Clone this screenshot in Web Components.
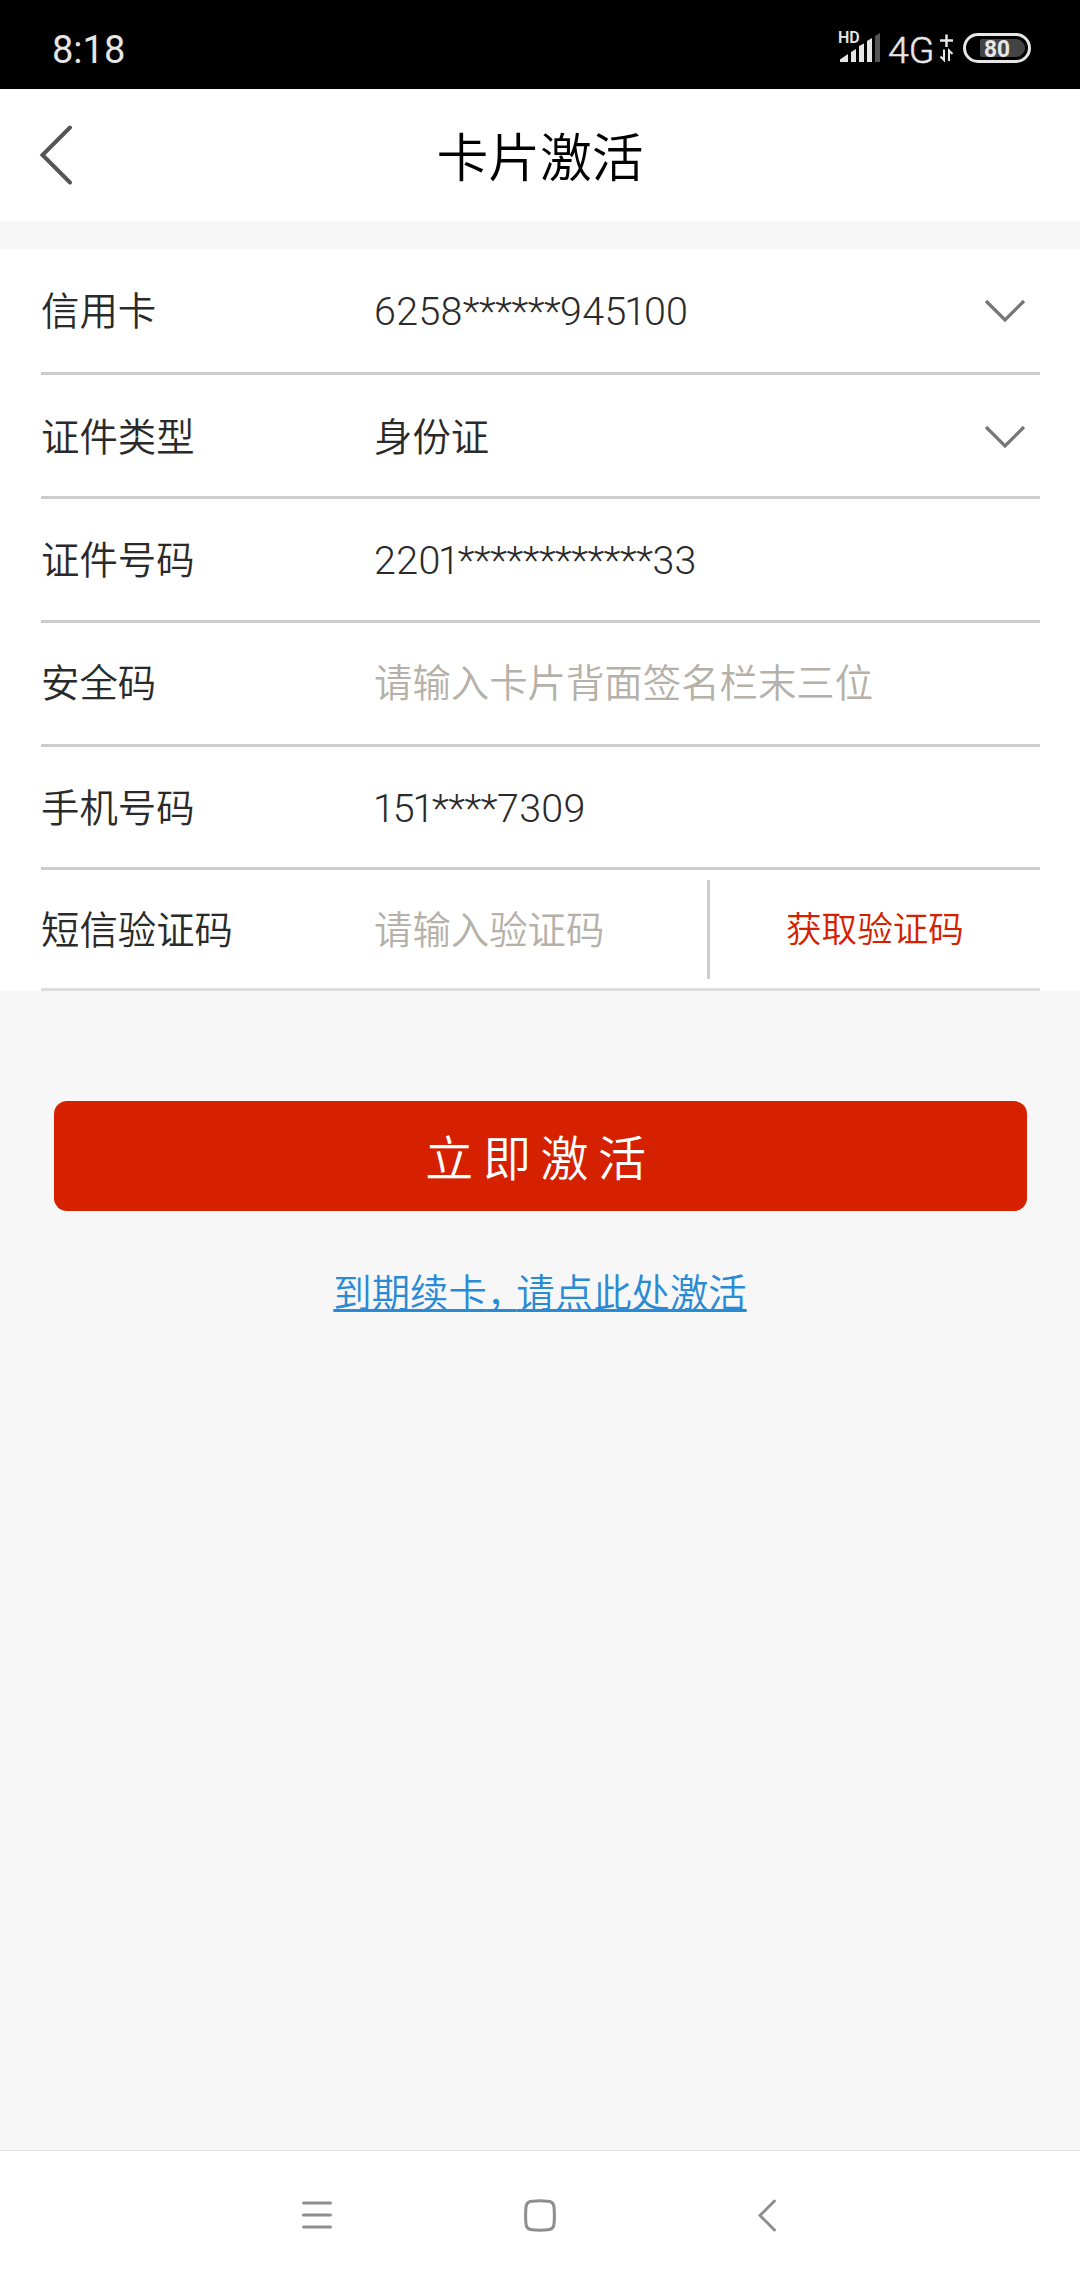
<!DOCTYPE html>
<html lang="zh-CN">
<head>
<meta charset="UTF-8">
<title>卡片激活</title>
<style>
  body {
    margin: 0;
    background: #f7f7f7;
    font-family: Roboto, "Noto Sans CJK SC", sans-serif;
    font-weight: 350;
    color: #2a2a2a;
  }
</style>
</head>
<body>
<activation-page></activation-page>

<script>
class StatusBar extends HTMLElement {
    constructor() {
        super();
        this.attachShadow({ mode: 'open' }).innerHTML = `
          <style>
            :host {
              display: flex;
              align-items: center;
              justify-content: space-between;
              box-sizing: border-box;
              height: 89px;
              padding: 6px 49px 0 52px;
              background: #000;
              color: #e6e6e6;
            }
            .time { font-size: 38px; line-height: 44px; font-weight: 400; padding-top: 4px; }
            svg { display: block; }
          </style>
          <span class="time"><slot></slot></span>
          <svg width="194" height="56" viewBox="837 19 194 56" font-family="Roboto" fill="#e6e6e6">
            <text x="838" y="42" font-size="16" font-weight="600">HD</text>
            <path d="M840 61V58.5L848 53V61ZM851 61V51L856 48V61ZM859 61V45L864 42.5V61ZM867 61V40L872 37V61Z"/>
            <path d="M875 61V35L880 32V61Z" fill="#555"/>
            <text x="888" y="61.5" font-size="37.5" font-weight="300" stroke="#e6e6e6" stroke-width=".5">4G</text>
            <path d="M940 39.5H953M946.5 33.5V46" fill="none" stroke="#e6e6e6" stroke-width="2.5"/>
            <path d="M944 48.5V59L940.5 55.5M949 60V49.5L952.5 53" fill="none" stroke="#e6e6e6" stroke-width="2"/>
            <rect x="964.5" y="33.5" width="65" height="27" rx="13.5" fill="none" stroke="#e6e6e6" stroke-width="3"/>
            <path d="M982 38H1016A9 9 0 0 1 1016 56H982Q980 56 980 54V40Q980 38 982 38Z" fill="#444"/>
            <text x="984" y="55.5" font-size="23.5" font-weight="700" textLength="26" lengthAdjust="spacingAndGlyphs">80</text>
          </svg>
        `;
    }
}

class TitleBar extends HTMLElement {
    constructor() {
        super();
        this.attachShadow({ mode: 'open' }).innerHTML = `
          <style>
            :host {
              display: grid;
              grid-template-columns: 120px 1fr 120px;
              align-items: center;
              height: 132px;
              margin-bottom: 28px;
              background: #fff;
            }
            svg { display: block; margin-left: 36px; }
            h1 {
              margin: 0;
              padding-top: 9px;
              font-size: 51.8px;
              line-height: 60px;
              font-weight: inherit;
              text-align: center;
              color: #000;
            }
          </style>
          <svg width="40" height="64" viewBox="0 0 40 64">
            <path d="M34 4.5L6.5 32L34 59.5" fill="none" stroke="#555" stroke-width="4" stroke-linecap="round"/>
          </svg>
          <h1><slot></slot></h1>
        `;
    }
}

class FormRow extends HTMLElement {
    constructor() {
        super();
        this.attachShadow({ mode: 'open' }).innerHTML = `
          <style>
            :host {
              display: flex;
              align-items: center;
              box-sizing: border-box;
              height: 124px;
              margin: 0 40px 0 41px;
              border-bottom: 3px solid #ccc;
              font-size: 38.4px;
              line-height: 56px;
            }
            .label { width: 333px; }
            .value { flex: 1; white-space: nowrap; }
            .label, .value { padding-top: var(--text-drop, 3px); }
            :host([placeholder]) .value { color: #b5b1a9; }
            svg { display: none; margin-right: 12px; }
            :host([select]) svg { display: block; }
          </style>
          <span class="label"></span>
          <span class="value"><slot></slot></span>
          <slot name="action"></slot>
          <svg width="46" height="26" viewBox="0 0 46 26">
            <path d="M4 3L23 22L42 3" fill="none" stroke="#777" stroke-width="3.2"/>
          </svg>
        `;
    }

    connectedCallback() {
        this.shadowRoot.querySelector('.label').textContent = this.getAttribute('label');
    }
}

class CodeButton extends HTMLElement {
    constructor() {
        super();
        this.attachShadow({ mode: 'open' }).innerHTML = `
          <style>
            :host {
              display: flex;
              align-items: center;
              box-sizing: border-box;
              width: 333px;
              height: 99px;
              padding: 2px 0 0 76px;
              border-left: 3px solid #ccc;
              font-size: 35.6px;
              color: #d62100;
            }
          </style>
          <slot></slot>
        `;
    }
}

class SubmitButton extends HTMLElement {
    constructor() {
        super();
        this.attachShadow({ mode: 'open' }).innerHTML = `
          <style>
            :host { display: block; margin: 110px 53px 0 54px; }
            button {
              display: block;
              width: 100%;
              height: 110px;
              padding: 0 0 2px;
              border: none;
              border-radius: 13px;
              background: #d62100;
              color: #fff;
              font: inherit;
              font-size: 48px;
              letter-spacing: 9.6px;
            }
          </style>
          <button><slot></slot></button>
        `;
    }
}

class RenewLink extends HTMLElement {
    constructor() {
        super();
        this.attachShadow({ mode: 'open' }).innerHTML = `
          <style>
            :host {
              display: flex;
              justify-content: center;
              margin-top: 55px;
              font-size: 38.4px;
              line-height: 56px;
            }
            a {
              color: #2a8ad4;
              text-decoration: underline;
              text-decoration-thickness: 3px;
              text-underline-offset: 2px;
              text-decoration-skip-ink: none;
            }
          </style>
          <a><slot></slot></a>
        `;
    }
}

class NavBar extends HTMLElement {
    constructor() {
        super();
        this.attachShadow({ mode: 'open' }).innerHTML = `
          <style>
            :host {
              display: flex;
              align-items: center;
              justify-content: center;
              gap: 191px;
              box-sizing: border-box;
              height: 130px;
              margin-top: auto;
              border-top: 1px solid #e0e0e0;
              background: #fff;
            }
            svg { fill: none; stroke: #8e8e8e; stroke-width: 3; stroke-linecap: round; }
          </style>
          <svg width="32" height="34" viewBox="0 0 32 34"><path d="M2.5 4H29.5M2.5 16H29.5M2.5 28H29.5"/></svg>
          <svg width="32" height="34" viewBox="0 0 32 34"><path d="M8 2.2Q16 1.500 24 2.200Q29.500 2.500 30 8Q30.800 16.500 30 25Q29.500 30.500 24 30.800Q16 31.500 8 30.800Q2.500 30.500 2 25Q1.200 16.500 2 8Q2.500 2.500 8 2.200Z"/></svg>
          <svg width="32" height="34" viewBox="0 0 32 34"><path d="M27.5 2L13 16.5L27.5 31"/></svg>
        `;
    }
}

class ActivationPage extends HTMLElement {
    constructor() {
        super();
        this.attachShadow({ mode: 'open' }).innerHTML = `
          <style>
            :host { display: flex; flex-direction: column; height: 2280px; }
            section { background: #fff; }
            .num { font-size: 39.4px; font-weight: 300; letter-spacing: .35px; }
            .stars { letter-spacing: -.5px; }
            .one { margin: 0 -2.5px; }
            .lead { margin: 0 -2.5px 0 -1px; }
            .tall { height: 126px; }
            .type { padding-top: 2px; }
            .code { --text-drop: 0; }
            .phone { height: 123px; }
            .sms { height: 121px; border-color: #ddd; }
            .comma { letter-spacing: -8.9px; }
          </style>
          <status-bar>8:18</status-bar>
          <title-bar>卡片激活</title-bar>
          <section>
            <form-row class="tall" label="信用卡" select><span class="num">6258<span class="stars">******</span>945<span class="one">1</span>00</span></form-row>
            <form-row class="type" label="证件类型" select>身份证</form-row>
            <form-row label="证件号码"><span class="num">220<span class="one">1</span><span class="stars">************</span>33</span></form-row>
            <form-row class="code" label="安全码" placeholder>请输入卡片背面签名栏末三位</form-row>
            <form-row class="phone" label="手机号码"><span class="num"><span class="lead">1</span>5<span class="one">1</span><span class="stars">****</span>7309</span></form-row>
            <form-row class="sms" label="短信验证码" placeholder>
              请输入验证码
              <code-button slot="action">获取验证码</code-button>
            </form-row>
          </section>
          <submit-button>立即激活</submit-button>
          <renew-link>到期续卡<span class="comma">，</span>请点此处激活</renew-link>
          <nav-bar></nav-bar>
        `;
    }
}

customElements.define('status-bar', StatusBar);
customElements.define('title-bar', TitleBar);
customElements.define('form-row', FormRow);
customElements.define('code-button', CodeButton);
customElements.define('submit-button', SubmitButton);
customElements.define('renew-link', RenewLink);
customElements.define('nav-bar', NavBar);
customElements.define('activation-page', ActivationPage);
</script>
</body>
</html>
